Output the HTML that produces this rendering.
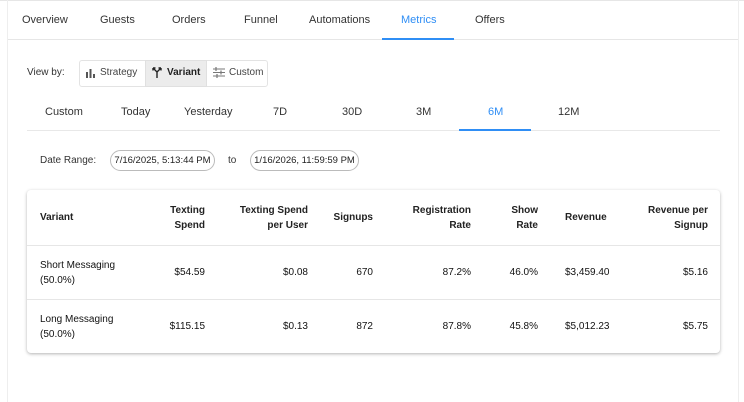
<!DOCTYPE html>
<html><head><style>
*{margin:0;padding:0;box-sizing:border-box}
body{width:744px;height:402px;background:#fff;font-family:"Liberation Sans",sans-serif;color:#222;position:relative;overflow:hidden;font-size:11px}
.a{position:absolute;white-space:nowrap}
.tab{position:absolute;top:14px;font-size:11px;color:#333;text-align:center}
.r{text-align:right}
.th{font-weight:bold;font-size:10px;line-height:15px;color:#222}
.td{font-size:10px;line-height:15px;color:#111}
</style></head><body>
<div class="a" style="left:0;top:0;width:744px;height:1px;background:#e6e6e6"></div>
<div class="a" style="left:7px;top:0;width:1px;height:402px;background:#eee"></div>
<div class="a" style="left:738px;top:0;width:1px;height:402px;background:#eee"></div>
<div class="tab" style="left:22px">Overview</div>
<div class="tab" style="left:100px">Guests</div>
<div class="tab" style="left:172px">Orders</div>
<div class="tab" style="left:244px">Funnel</div>
<div class="tab" style="left:309px">Automations</div>
<div class="tab" style="left:401px;color:#2f8ef5">Metrics</div>
<div class="tab" style="left:475px">Offers</div>
<div class="a" style="left:8px;top:39px;width:730px;height:1px;background:#e6e6e6"></div>
<div class="a" style="left:382px;top:38px;width:72px;height:2px;background:#2f8ef5"></div>

<div class="a" style="left:27px;top:67px;font-size:10px;color:#333">View by:</div>
<div class="a" style="left:79px;top:60px;width:189px;height:27px;border:1px solid #e3e3e3;border-radius:3px"></div>
<div class="a" style="left:145px;top:60px;width:62px;height:27px;background:#ececec;border:1px solid #e0e0e0"></div>
<svg class="a" style="left:86px;top:68px" width="10" height="10"><rect x="0" y="4" width="2" height="6" fill="#555"/><rect x="3.5" y="1" width="2" height="9" fill="#555"/><rect x="7" y="6" width="2" height="4" fill="#555"/></svg>
<div class="a" style="left:100px;top:67px;font-size:10px;color:#444">Strategy</div>
<svg class="a" style="left:152px;top:67px" width="10" height="11"><path d="M1 1l4 4v6M9 1l-4 4M1 1h2.5M1 1v2.5M9 1h-2.5M9 1v2.5" stroke="#222" stroke-width="1.4" fill="none"/></svg>
<div class="a" style="left:167px;top:67px;font-size:10px;font-weight:bold">Variant</div>
<svg class="a" style="left:213px;top:67px" width="12" height="11"><path d="M0 2h12M0 5.5h12M0 9h12" stroke="#777" stroke-width="1"/><path d="M3 0v4M8 3.5v4M4 7v4" stroke="#777" stroke-width="1.2"/></svg>
<div class="a" style="left:229px;top:67px;font-size:10px;color:#444">Custom</div>

<div class="tab" style="left:45px;top:106px">Custom</div>
<div class="tab" style="left:121px;top:106px">Today</div>
<div class="tab" style="left:184px;top:106px">Yesterday</div>
<div class="tab" style="left:273px;top:106px">7D</div>
<div class="tab" style="left:342px;top:106px">30D</div>
<div class="tab" style="left:416px;top:106px">3M</div>
<div class="tab" style="left:488px;top:106px;color:#2f8ef5">6M</div>
<div class="tab" style="left:558px;top:106px">12M</div>
<div class="a" style="left:27px;top:130px;width:693px;height:1px;background:#e8e8e8"></div>
<div class="a" style="left:459px;top:129px;width:72px;height:2px;background:#2f8ef5"></div>

<div class="a" style="left:40px;top:155px;font-size:10px;color:#333">Date Range:</div>
<div class="a" style="left:110px;top:150px;width:105px;height:21px;border:1px solid #bbb;border-radius:11px;font-size:9.5px;line-height:19px;text-align:center">7/16/2025, 5:13:44 PM</div>
<div class="a" style="left:228px;top:155px;font-size:10px;color:#333">to</div>
<div class="a" style="left:250px;top:150px;width:109px;height:21px;border:1px solid #bbb;border-radius:11px;font-size:9.5px;line-height:19px;text-align:center">1/16/2026, 11:59:59 PM</div>

<div class="a" style="left:27px;top:190px;width:693px;height:163px;border-radius:4px;box-shadow:0 1px 3px rgba(0,0,0,.3);background:#fff"></div>
<div class="a" style="left:27px;top:245px;width:693px;height:1px;background:#e6e6e6"></div>
<div class="a" style="left:27px;top:299px;width:693px;height:1px;background:#e6e6e6"></div>

<div class="a th" style="left:40px;top:210px">Variant</div>
<div class="a th r" style="right:539px;top:203px">Texting<br>Spend</div>
<div class="a th r" style="right:436px;top:203px">Texting Spend<br>per User</div>
<div class="a th r" style="right:371px;top:210px">Signups</div>
<div class="a th r" style="right:273px;top:203px">Registration<br>Rate</div>
<div class="a th r" style="right:206px;top:203px">Show<br>Rate</div>
<div class="a th" style="left:565px;top:210px">Revenue</div>
<div class="a th r" style="right:36px;top:203px">Revenue per<br>Signup</div>

<div class="a td" style="left:40px;top:258px">Short Messaging<br>(50.0%)</div>
<div class="a td r" style="right:539px;top:265px">$54.59</div>
<div class="a td r" style="right:436px;top:265px">$0.08</div>
<div class="a td r" style="right:371px;top:265px">670</div>
<div class="a td r" style="right:273px;top:265px">87.2%</div>
<div class="a td r" style="right:206px;top:265px">46.0%</div>
<div class="a td" style="left:565px;top:265px">$3,459.40</div>
<div class="a td r" style="right:36px;top:265px">$5.16</div>

<div class="a td" style="left:40px;top:312px">Long Messaging<br>(50.0%)</div>
<div class="a td r" style="right:539px;top:319px">$115.15</div>
<div class="a td r" style="right:436px;top:319px">$0.13</div>
<div class="a td r" style="right:371px;top:319px">872</div>
<div class="a td r" style="right:273px;top:319px">87.8%</div>
<div class="a td r" style="right:206px;top:319px">45.8%</div>
<div class="a td" style="left:565px;top:319px">$5,012.23</div>
<div class="a td r" style="right:36px;top:319px">$5.75</div>
</body></html>
